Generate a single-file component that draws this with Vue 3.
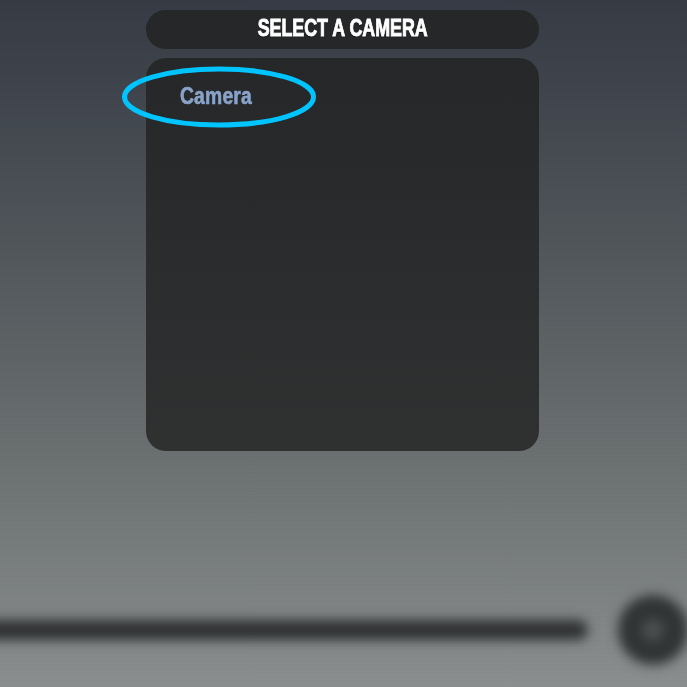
<script setup>
const cameras = ['Camera']
</script>

<template>
  <div class="screen">
    <div class="picker">
      <header class="picker-title"><span class="narrow-title">SELECT A CAMERA</span></header>
      <ul class="camera-list">
        <li v-for="cam in cameras" :key="cam" class="camera-item">{{ cam }}</li>
      </ul>
    </div>

    <!-- annotation drawn over the list -->
    <svg class="highlight" width="200" height="66" viewBox="0 0 200 66">
      <ellipse cx="97" cy="33" rx="94.5" ry="28" fill="none" stroke="#00c4ff" stroke-width="5" />
    </svg>

    <div class="controls">
      <div class="slider"></div>
      <div class="shutter"><span class="shutter-dot"></span></div>
    </div>
  </div>
</template>

<style>
html, body { margin: 0; padding: 0; }
</style>

<style scoped>
.screen {
  position: relative;
  width: 687px;
  height: 687px;
  overflow: hidden;
  display: flex;
  flex-direction: column;
  align-items: center;
  background:
    repeating-linear-gradient(180deg, rgba(0, 0, 0, 0.025) 0 1px, transparent 1px 2px),
    linear-gradient(180deg, #363b45 0%, #50565a 35%, #6d7273 68%, #8b8f8f 100%);
  font-family: "Liberation Sans", Arial, sans-serif;
}
.picker {
  width: 393px;
  margin: 10px 0 0 -2px;
  display: flex;
  flex-direction: column;
  gap: 9px;
}
.picker-title {
  height: 39px;
  line-height: 37px;
  border-radius: 20px;
  background: #252729;
  text-align: center;
}
.narrow-title {
  display: inline-block;
  transform: scaleX(0.775);
  color: #fff;
  font-size: 23px;
  font-weight: 700;
  white-space: nowrap;
  -webkit-text-stroke: 0.9px #fff;
  text-shadow: 0 1px 1px #000;
}
.camera-list {
  list-style: none;
  margin: 0;
  padding: 24px 34px 0;
  height: 393px;
  box-sizing: border-box;
  border-radius: 20px;
  background: linear-gradient(180deg, #252729 0%, #2f3131 100%);
}
.camera-item {
  color: #8aa3c8;
  font-size: 23px;
  line-height: 28px;
  font-weight: 700;
  letter-spacing: 0.2px;
  -webkit-text-stroke: 0.6px #8aa3c8;
  transform: scaleX(0.84);
  transform-origin: left center;
}
.highlight {
  position: absolute;
  left: 122px;
  top: 64px;
}
.controls {
  margin-top: auto;
  width: 100%;
  height: 70px;
  margin-bottom: 22px;
  display: flex;
  align-items: center;
  gap: 30px;
  filter: blur(6px);
}
.slider {
  flex: 1;
  height: 20px;
  margin-left: -20px;
  border-radius: 10px;
  background: #2f3132;
}
.shutter {
  width: 70px;
  height: 70px;
  margin-right: -1px;
  border-radius: 50%;
  background: #313434;
  display: flex;
  align-items: center;
  justify-content: center;
}
.shutter-dot {
  width: 22px;
  height: 22px;
  border-radius: 50%;
  background: #4d5050;
}
</style>
